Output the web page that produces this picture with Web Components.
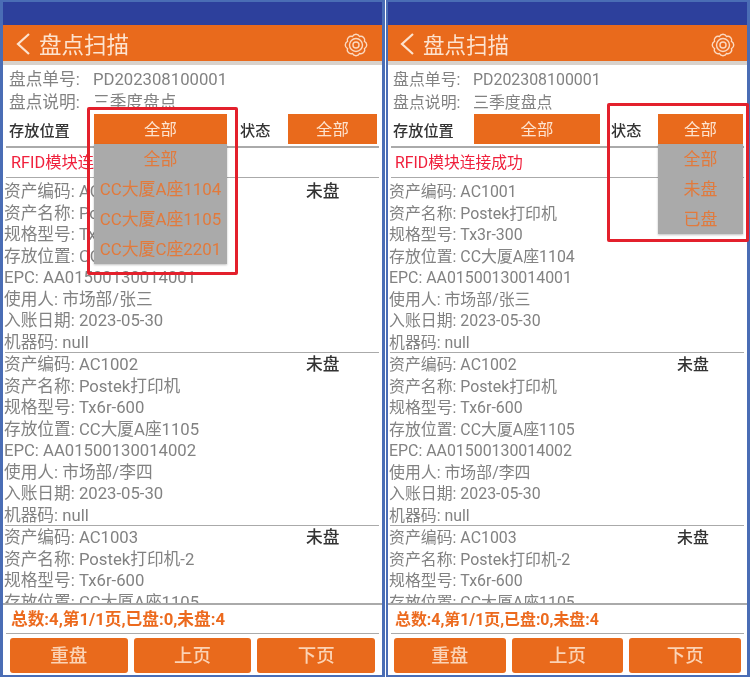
<!DOCTYPE html>
<html lang="zh">
<head>
<meta charset="utf-8">
<title>盘点扫描</title>
<style>
  html, body { margin: 0; padding: 0; background: #fff; }
  body { display: flex; gap: 1px; width: 753px; height: 679px; overflow: hidden; }
</style>
</head>
<body>
  <scan-screen style="--pad:6px; --fs:16.7px; --rfid:16.3px; --title:22.5px; --status-x:302px; --foot:7px; --lab:84px; --back:12px; --gear:13px; width:385px; --bl:3px;">
    <scan-filter>
      <span slot="label-a" style="width:85px">存放位置</span>
      <filter-select slot="select-a" style="width:133px" open>
        <span>全部</span><span>CC大厦A座1104</span><span>CC大厦A座1105</span><span>CC大厦C座2201</span>
      </filter-select>
      <span slot="label-b" style="margin-left:13px; width:48px">状态</span>
      <filter-select slot="select-b" style="width:89px"></filter-select>
    </scan-filter>
    <red-mark slot="overlay" style="left:84px; top:105px; width:145px; height:162px"></red-mark>
    <bottom-button slot="btn">重盘</bottom-button>
    <bottom-button slot="btn">上页</bottom-button>
    <bottom-button slot="btn">下页</bottom-button>
  </scan-screen>

  <scan-screen style="--pad:5px; --fs:15.9px; --rfid:15.8px; --title:21.5px; --status-x:288px; --foot:6px; --lab:80px; --back:11px; --gear:11px; width:364px; --bl:2px;">
    <scan-filter>
      <span slot="label-a" style="width:81px">存放位置</span>
      <filter-select slot="select-a" style="width:126px"></filter-select>
      <span slot="label-b" style="margin-left:11px; width:47px">状态</span>
      <filter-select slot="select-b" style="width:85px" open>
        <span>全部</span><span>未盘</span><span>已盘</span>
      </filter-select>
    </scan-filter>
    <red-mark slot="overlay" style="left:219px; top:101px; width:136px; height:133px"></red-mark>
    <bottom-button slot="btn">重盘</bottom-button>
    <bottom-button slot="btn">上页</bottom-button>
    <bottom-button slot="btn">下页</bottom-button>
  </scan-screen>

<script>
const FONT = '"Roboto", "Noto Sans CJK SC", sans-serif';

// third card is cut off by the list, so it only has the rows you can see
const ASSETS = [
  { code: 'AC1001', name: 'Postek打印机', model: 'Tx3r-300', place: 'CC大厦A座1104', epc: 'AA01500130014001', user: '市场部/张三' },
  { code: 'AC1002', name: 'Postek打印机', model: 'Tx6r-600', place: 'CC大厦A座1105', epc: 'AA01500130014002', user: '市场部/李四' },
  { code: 'AC1003', name: 'Postek打印机-2', model: 'Tx6r-600', place: 'CC大厦A座1105' }
];

class ScanScreen extends HTMLElement {
  constructor() {
    super();
    this.attachShadow({ mode: 'open' });
  }

  connectedCallback() {
    this.shadowRoot.innerHTML = `
      <style>
        :host {
          display: flex;
          flex-direction: column;
          position: relative;
          box-sizing: border-box;
          height: 677px;
          flex: none;
          background: #fff;
          border: 3px solid #4a6db5;
          border-left-width: var(--bl);
          border-top-width: 2px;
          border-bottom-width: 2px;
          font-family: ${FONT};
          font-size: var(--fs);
          color: #828282;
          filter: blur(0.55px);
        }
        .status { height: 23px; background: #2d409c; flex: none; }
        .line { flex: none; margin: 0 3px; background: #aaa; height: 1px; }
        .line.thick { height: 2px; }
        .info { flex: none; padding: 3px 0 0 var(--pad); }
        .info div { height: 23px; line-height: 24px; white-space: nowrap; }
        .info b { font-weight: 400; display: inline-block; width: var(--lab); }
        .rfid {
          flex: none;
          height: 29px;
          line-height: 29px;
          padding-left: calc(var(--pad) + 2px);
          font-size: var(--rfid);
          color: #f0203c;
        }
        .list { flex: 1; min-height: 0; overflow: hidden; padding: 2px 0 0 1px; }
        .sum {
          flex: none;
          height: 28px;
          line-height: 30px;
          padding-left: calc(var(--pad) + 2px);
          font-weight: 700;
          color: #ec6a1e;
        }
        .foot {
          flex: none;
          display: flex;
          gap: 6px;
          height: 41px;
          box-sizing: border-box;
          padding: 4px var(--foot) 2px;
        }
        ::slotted(bottom-button) { flex: 1; }
      </style>
      <div class="status"></div>
      <scan-header></scan-header>
      <div class="info">
        <div><b>盘点单号:</b>PD202308100001</div>
        <div><b>盘点说明:</b>三季度盘点</div>
      </div>
      <slot></slot>
      <div class="line thick" style="margin-top:2px"></div>
      <div class="rfid">RFID模块连接成功</div>
      <div class="line"></div>
      <div class="list"></div>
      <div class="line thick" style="margin:0"></div>
      <div class="sum">总数:4,第1/1页,已盘:0,未盘:4</div>
      <div class="line"></div>
      <div class="foot"><slot name="btn"></slot></div>
      <slot name="overlay"></slot>
    `;
    const list = this.shadowRoot.querySelector('.list');
    ASSETS.forEach(asset => {
      const card = document.createElement('asset-card');
      card.setAttribute('data-asset', JSON.stringify(asset));
      list.appendChild(card);
    });
  }
}

class ScanHeader extends HTMLElement {
  constructor() {
    super();
    this.attachShadow({ mode: 'open' });
    this.shadowRoot.innerHTML = `
      <style>
        :host {
          display: flex;
          align-items: center;
          flex: none;
          height: 36px;
          background: #e96a1c;
          border-bottom: 4px solid #d8d2cc;
          color: #fde3cf;
          font-size: var(--title);
        }
        .back { margin: 2px 0 0 var(--back); width: 16px; height: 24px; flex: none; }
        h1 { font: inherit; margin: 0 0 0 8px; flex: 1; }
        .gear { width: 26px; height: 26px; margin: 3px var(--gear) 0 0; flex: none; }
      </style>
      <svg class="back" viewBox="0 0 16 24" fill="none" stroke="#fde3cf" stroke-width="2.2">
        <path d="M14 2 L3 12 L14 22"/>
      </svg>
      <h1>盘点扫描</h1>
      <svg class="gear" viewBox="0 0 24 24" fill="none" stroke="#fbd9c0" stroke-width="1.3">
        <path d="M19.85 15.25A3.6 3.6 0 0 1 15.25 19.85A3.6 3.6 0 0 1 8.75 19.85A3.6 3.6 0 0 1 4.15 15.25A3.6 3.6 0 0 1 4.15 8.75A3.6 3.6 0 0 1 8.75 4.15A3.6 3.6 0 0 1 15.25 4.15A3.6 3.6 0 0 1 19.85 8.75A3.6 3.6 0 0 1 19.85 15.25Z"/>
        <circle cx="12" cy="12" r="6"/>
        <circle cx="12" cy="12" r="2.8"/>
      </svg>
    `;
  }
}

class ScanFilter extends HTMLElement {
  constructor() {
    super();
    this.attachShadow({ mode: 'open' });
    this.shadowRoot.innerHTML = `
      <style>
        :host {
          display: flex;
          align-items: center;
          flex: none;
          height: 30px;
          padding-left: var(--pad);
          color: #333;
          font-size: 15.2px;
          font-weight: 500;
        }
        ::slotted(span) { flex: none; }
      </style>
      <slot name="label-a"></slot>
      <slot name="select-a"></slot>
      <slot name="label-b"></slot>
      <slot name="select-b"></slot>
    `;
  }
}

class FilterSelect extends HTMLElement {
  constructor() {
    super();
    this.attachShadow({ mode: 'open' });
    this.shadowRoot.innerHTML = `
      <style>
        :host {
          display: block;
          position: relative;
          flex: none;
          height: 30px;
        }
        .value {
          height: 100%;
          line-height: 31px;
          text-align: center;
          background: #e96a1c;
          color: #fde3cf;
          font-size: 16.4px;
          font-weight: 400;
        }
        .menu {
          display: none;
          position: absolute;
          z-index: 2;
          top: 30px;
          left: 0;
          right: 0;
          background: #aaaaaa;
          box-shadow: 0 1px 2px rgba(0, 0, 0, 0.25);
          color: #e27a3c;
          font-size: 16.9px;
          font-weight: 400;
          text-align: center;
          white-space: nowrap;
        }
        :host([open]) .menu { display: block; }
        ::slotted(span) { display: block; height: 30px; line-height: 31px; }
      </style>
      <div class="value">全部</div>
      <div class="menu"><slot></slot></div>
    `;
  }
}

class AssetCard extends HTMLElement {
  constructor() {
    super();
    this.attachShadow({ mode: 'open' });
  }

  connectedCallback() {
    const a = JSON.parse(this.getAttribute('data-asset'));
    const rest = a.epc ? `
      <div class="row">EPC: ${a.epc}</div>
      <div class="row">使用人: ${a.user}</div>
      <div class="row">入账日期: 2023-05-30</div>
      <div class="row">机器码: null</div>
      <hr>` : '';
    this.shadowRoot.innerHTML = `
      <style>
        :host { display: block; padding-top: 1px; }
        .row { height: 21.5px; line-height: 21.5px; white-space: nowrap; }
        .top { display: flex; }
        .top span:first-child { width: var(--status-x); flex: none; }
        .state { color: #333; font-weight: 500; }
        hr { border: 0; height: 1px; background: #aaa; margin: -1px 3px 0 1px; }
      </style>
      <div class="row top"><span>资产编码: ${a.code}</span><span class="state">未盘</span></div>
      <div class="row">资产名称: ${a.name}</div>
      <div class="row">规格型号: ${a.model}</div>
      <div class="row">存放位置: ${a.place}</div>
      ${rest}
    `;
  }
}

class BottomButton extends HTMLElement {
  constructor() {
    super();
    this.attachShadow({ mode: 'open' });
    this.shadowRoot.innerHTML = `
      <style>
        :host {
          display: block;
          height: 35px;
          line-height: 36px;
          text-align: center;
          background: #e96a1c;
          border-radius: 3px;
          color: #fbd3b5;
          font-size: 18.5px;
          font-weight: 500;
        }
      </style>
      <slot></slot>
    `;
  }
}

class RedMark extends HTMLElement {
  constructor() {
    super();
    this.attachShadow({ mode: 'open' });
    this.shadowRoot.innerHTML = `
      <style>
        :host {
          display: block;
          position: absolute;
          z-index: 3;
          border: 3px solid #e3202c;
          border-radius: 2px;
          pointer-events: none;
        }
      </style>
    `;
  }
}

customElements.define('scan-screen', ScanScreen);
customElements.define('scan-header', ScanHeader);
customElements.define('scan-filter', ScanFilter);
customElements.define('filter-select', FilterSelect);
customElements.define('asset-card', AssetCard);
customElements.define('bottom-button', BottomButton);
customElements.define('red-mark', RedMark);
</script>
</body>
</html>
